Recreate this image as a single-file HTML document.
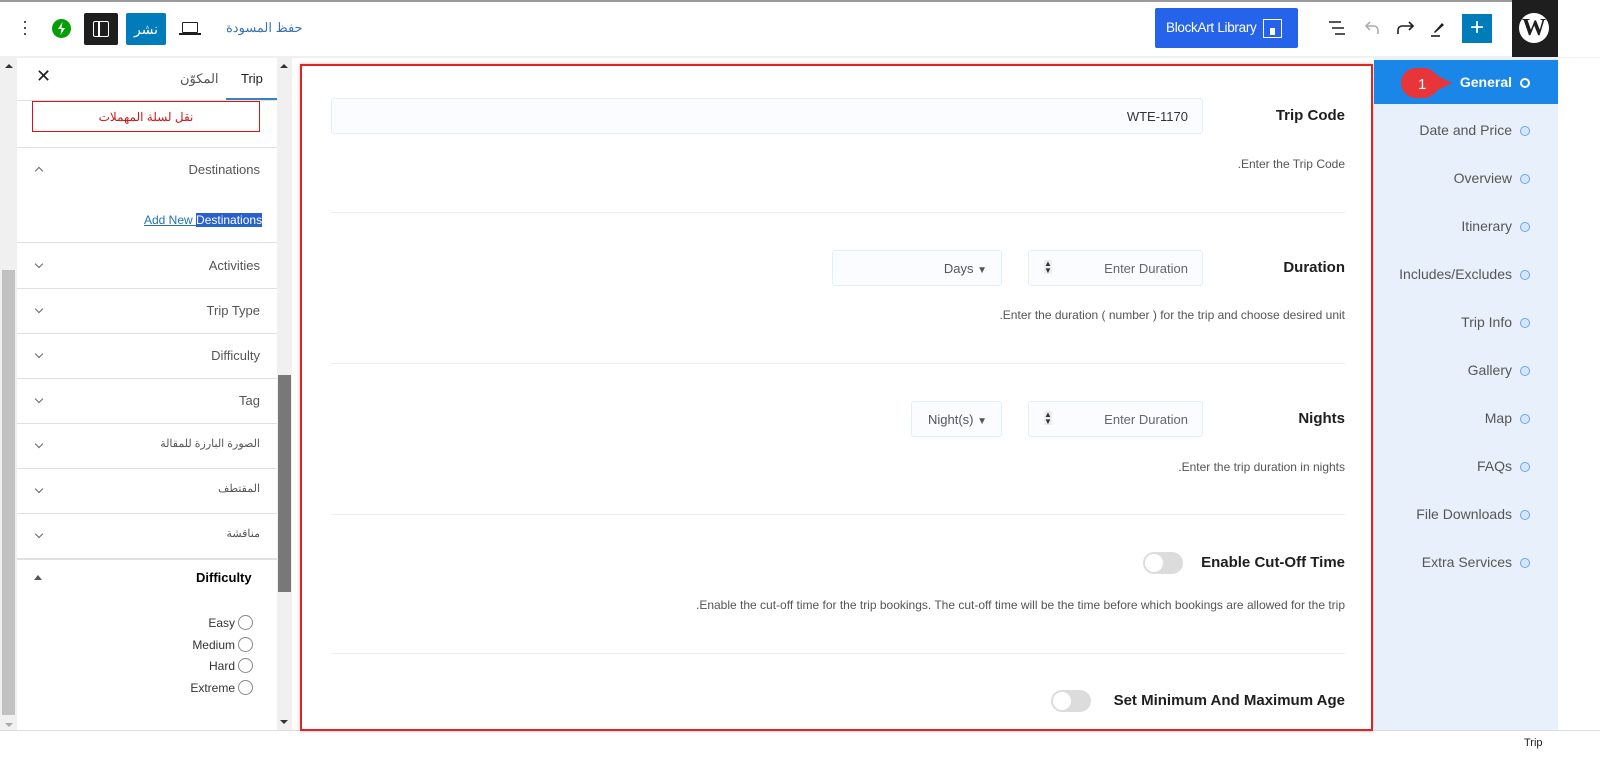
<!DOCTYPE html>
<html><head><meta charset="utf-8"><style>
*{box-sizing:border-box;margin:0;padding:0}
body{width:1600px;height:768px;overflow:hidden;background:#fff;font-family:"Liberation Sans","Noto Sans CJK SC",sans-serif;position:relative;color:#1e1e1e}
.a{position:absolute}
.r{text-align:right}
.sep{position:absolute;left:17px;width:260px;height:1px;background:#e0e0e0}
.row{position:absolute;left:17px;width:243px;text-align:right;font-size:13px;color:#555}
.chev{position:absolute;left:36px;width:6px;height:6px;border-right:1.3px solid #666;border-bottom:1.3px solid #666;transform:rotate(45deg)}
.lab{position:absolute;right:255px;font-size:15px;font-weight:bold;color:#1e1e1e;text-align:right}
.desc{position:absolute;right:255px;font-size:12px;color:#555;text-align:right}
.inp{position:absolute;border:1px solid #e2eefb;background:#fafcff;border-radius:3px;height:36px;font-size:13px;color:#555}
.hl{position:absolute;left:331px;width:1014px;height:1px;background:#eceef0}
.nav{position:absolute;right:70px;font-size:14px;color:#555;text-align:right}
.dot{display:inline-block;width:10px;height:10px;border:1.5px solid #6aa8ea;background:#d6e6f8;border-radius:50%;margin-left:8px;vertical-align:-1px}
.tog{position:absolute;width:40px;height:22px;border-radius:11px;background:#dcdcdc}
.tog:after{content:"";position:absolute;left:2px;top:2px;width:18px;height:18px;border-radius:50%;background:#fff}
.rad{display:inline-block;width:15px;height:15px;border:1px solid #888;border-radius:50%;margin-left:3px;vertical-align:-3px}
</style></head><body>
<div class="a" style="left:0;top:0;width:1600px;height:2px;background:#9a9a9a"></div>
<div class="a" style="left:0;top:56px;width:1600px;height:2px;background:#f0f0f0"></div>
<div class="a" style="left:22px;top:18px;font-size:18px;line-height:6px;color:#333;width:6px">·<br>·<br>·</div>
<div class="a" style="left:52px;top:19px;width:19px;height:19px;border-radius:50%;background:#069e08"><svg width="19" height="19"><path d="M10.5 3 L6 10 H9.5 L8.5 16 L13 9 H9.5Z" fill="#fff"/></svg></div>
<div class="a" style="left:84px;top:13px;width:34px;height:32px;background:#1e1e1e;border-radius:2px"><div class="a" style="left:9px;top:8px;width:16px;height:16px;border:1.5px solid #fff;border-radius:2px"></div><div class="a" style="left:14px;top:8px;width:1.5px;height:16px;background:#fff"></div></div>
<div class="a" style="left:126px;top:13px;width:40px;height:32px;background:#007cba;color:#fff;font-size:14px;text-align:center;line-height:32px;border-radius:2px">نشر</div>
<div class="a" style="left:182px;top:22px;width:16px;height:11px;border:1.6px solid #1e1e1e;border-radius:1px"></div>
<div class="a" style="left:179px;top:33px;width:22px;height:2px;background:#1e1e1e"></div>
<div class="a" style="left:226px;top:20px;font-size:13px;color:#3a70b0">حفظ المسودة</div>
<div class="a" style="left:1155px;top:8px;width:143px;height:40px;background:#2563eb;border-radius:2px"></div>
<div class="a" style="left:1166px;top:20px;font-size:13.5px;color:#fff;letter-spacing:-0.3px">BlockArt Library</div>
<div class="a" style="left:1263px;top:19px;width:19px;height:19px;border:1.5px solid #fff"></div>
<div class="a" style="left:1270px;top:28px;width:5px;height:7px;background:#fff"></div>
<svg class="a" style="left:1325px;top:18px" width="24" height="22"><path d="M4 4h12M7 10h12M10 16h10" stroke="#1e1e1e" stroke-width="1.6"/></svg>
<svg class="a" style="left:1362px;top:18px" width="22" height="22"><path d="M16 16v-4a4 4 0 0 0-4-4H5M8 4 4 8l4 4" stroke="#aaa" stroke-width="1.5" fill="none"/></svg>
<svg class="a" style="left:1394px;top:18px" width="22" height="22"><path d="M4 16v-4a4 4 0 0 1 4-4h11M15 4l4 4-4 4" stroke="#1e1e1e" stroke-width="1.6" fill="none"/></svg>
<svg class="a" style="left:1428px;top:18px" width="20" height="22"><path d="M6 14l8-9 2 2-9 8z" fill="#1e1e1e"/><path d="M3 18h9" stroke="#1e1e1e" stroke-width="1.6"/></svg>
<div class="a" style="left:1462px;top:14px;width:30px;height:29px;background:#007cba;color:#fff;font-size:24px;text-align:center;line-height:28px">+</div>
<div class="a" style="left:1512px;top:0;width:88px;height:57px;background:#fff"></div>
<div class="a" style="left:1512px;top:0;width:46px;height:57px;background:#1e1e1e"><div class="a" style="left:7px;top:13px;width:30px;height:30px;border-radius:50%;background:#fff;color:#1e1e1e;font:bold 24px 'Liberation Serif',serif;text-align:center;line-height:31px">W</div></div>
<div class="a" style="left:0;top:58px;width:17px;height:672px;background:#f0f0f0"></div>
<div class="a" style="left:2px;top:270px;width:13px;height:445px;background:#c1c1c1"></div>
<div class="a" style="left:5px;top:64px;border:4px solid transparent;border-bottom:4px solid #333;border-top:0"></div>
<div class="a" style="left:5px;top:723px;border:4px solid transparent;border-top:4px solid #aaa;border-bottom:0"></div>
<div class="a" style="left:17px;top:58px;width:260px;height:672px;background:#fff"></div>
<div class="a" style="left:36px;top:66px;font-size:18px;color:#1e1e1e">✕</div>
<div class="a" style="left:180px;top:71px;font-size:13px;color:#555">المكوّن</div>
<div class="a" style="left:241px;top:71px;font-size:13px;color:#1e1e1e">Trip</div>
<div class="a" style="left:226px;top:98px;width:51px;height:2px;background:#3582c4"></div>
<div class="sep" style="top:100px"></div>
<div class="a" style="left:32px;top:101px;width:228px;height:31px;border:1px solid #cc1818;color:#cc1818;font-size:12px;text-align:center;line-height:30px">نقل لسلة المهملات</div>
<div class="sep" style="top:147px"></div>
<div class="row" style="top:162px">Destinations</div>
<div class="chev" style="top:168px;transform:rotate(225deg)"></div>
<div class="a" style="left:144px;top:213px;font-size:12px;color:#2271b1;text-decoration:underline">Add New <span style="background:#2b5fd0;color:#fff">Destinations</span></div>
<div class="sep" style="top:242px"></div>
<div class="row" style="top:258px">Activities</div><div class="chev" style="top:261px"></div>
<div class="sep" style="top:288px"></div>
<div class="row" style="top:303px">Trip Type</div><div class="chev" style="top:306px"></div>
<div class="sep" style="top:333px"></div>
<div class="row" style="top:348px">Difficulty</div><div class="chev" style="top:351px"></div>
<div class="sep" style="top:378px"></div>
<div class="row" style="top:393px">Tag</div><div class="chev" style="top:396px"></div>
<div class="sep" style="top:423px"></div>
<div class="row" style="top:437px;font-size:11px">الصورة البارزة للمقالة</div><div class="chev" style="top:441px"></div>
<div class="sep" style="top:468px"></div>
<div class="row" style="top:482px;font-size:11px">المقتطف</div><div class="chev" style="top:486px"></div>
<div class="sep" style="top:513px"></div>
<div class="row" style="top:527px;font-size:11px">مناقشة</div><div class="chev" style="top:531px"></div>
<div class="sep" style="top:558px;height:2px"></div>
<div class="a" style="left:196px;top:570px;font-size:13px;font-weight:bold;color:#000">Difficulty</div>
<div class="a" style="left:34px;top:575px;border:4px solid transparent;border-bottom:5px solid #555;border-top:0"></div>
<div class="a r" style="right:1347px;top:613px;font-size:12px;color:#333;line-height:21.7px">Easy<span class="rad"></span><br>Medium<span class="rad"></span><br>Hard<span class="rad"></span><br>Extreme<span class="rad"></span></div>
<div class="a" style="left:277px;top:58px;width:15px;height:672px;background:#f0f0f0"></div>
<div class="a" style="left:278px;top:375px;width:13px;height:217px;background:#787878"></div>
<div class="a" style="left:280px;top:64px;border:4px solid transparent;border-bottom:4px solid #333;border-top:0"></div>
<div class="a" style="left:280px;top:720px;border:4px solid transparent;border-top:4px solid #333;border-bottom:0"></div>
<div class="a" style="left:0;top:730px;width:1600px;height:1px;background:#ddd"></div>
<div class="a" style="left:1524px;top:737px;font-size:11px;color:#1e1e1e">Trip</div>
<div class="a" style="left:300px;top:64px;width:1073px;height:667px;border:2px solid #e02424;box-shadow:0 0 3px rgba(0,0,0,.3)"></div>
<div class="lab" style="top:107px">Trip Code</div>
<div class="inp" style="left:331px;top:98px;width:872px;text-align:right;padding-right:14px;line-height:35px;color:#333">WTE-1170</div>
<div class="desc" style="top:157px">.Enter the Trip Code</div>
<div class="hl" style="top:212px"></div>
<div class="lab" style="top:259px">Duration</div>
<div class="inp" style="left:1028px;top:250px;width:175px;line-height:35px;text-align:right;padding-right:14px;color:#666">Enter Duration</div>
<div class="a" style="left:1044px;top:260px;font-size:8px;line-height:7px;background:#eee;color:#333">▲<br>▼</div>
<div class="inp" style="left:832px;top:250px;width:170px;line-height:35px;text-align:right;padding-right:14px">Days <span style="font-size:10px">▼</span></div>
<div class="desc" style="top:308px">.Enter the duration ( number ) for the trip and choose desired unit</div>
<div class="hl" style="top:363px"></div>
<div class="lab" style="top:410px">Nights</div>
<div class="inp" style="left:1028px;top:401px;width:175px;line-height:35px;text-align:right;padding-right:14px;color:#666">Enter Duration</div>
<div class="a" style="left:1044px;top:411px;font-size:8px;line-height:7px;background:#eee;color:#333">▲<br>▼</div>
<div class="inp" style="left:911px;top:401px;width:91px;line-height:35px;text-align:right;padding-right:14px">Night(s) <span style="font-size:10px">▼</span></div>
<div class="desc" style="top:460px">.Enter the trip duration in nights</div>
<div class="hl" style="top:514px"></div>
<div class="lab" style="top:554px">Enable Cut-Off Time</div>
<div class="tog" style="left:1143px;top:552px"></div>
<div class="desc" style="top:598px">.Enable the cut-off time for the trip bookings. The cut-off time will be the time before which bookings are allowed for the trip</div>
<div class="hl" style="top:653px"></div>
<div class="lab" style="top:692px">Set Minimum And Maximum Age</div>
<div class="tog" style="left:1051px;top:690px"></div>
<div class="a" style="left:1374px;top:58px;width:184px;height:672px;background:#e8f1fb"></div>
<div class="a" style="left:1374px;top:60px;width:184px;height:44px;background:#1a86e8"></div>
<div class="nav" style="top:74px;color:#fff;font-weight:bold">General<span class="dot" style="background:transparent;border-color:#fff;border-width:2px"></span></div>
<svg class="a" style="left:1400px;top:66px" width="60" height="34"><path d="M16 2h8c6 0 10 4 14 8l14 7-14 7c-4 4-8 8-14 8h-8A15 15 0 0 1 16 2z" fill="#e8353a"/><text x="18" y="23" fill="#fff" font-size="15" font-family="Liberation Sans">1</text></svg>
<div class="nav" style="top:122px">Date and Price<span class="dot"></span></div>
<div class="nav" style="top:170px">Overview<span class="dot"></span></div>
<div class="nav" style="top:218px">Itinerary<span class="dot"></span></div>
<div class="nav" style="top:266px">Includes/Excludes<span class="dot"></span></div>
<div class="nav" style="top:314px">Trip Info<span class="dot"></span></div>
<div class="nav" style="top:362px">Gallery<span class="dot"></span></div>
<div class="nav" style="top:410px">Map<span class="dot"></span></div>
<div class="nav" style="top:458px">FAQs<span class="dot"></span></div>
<div class="nav" style="top:506px">File Downloads<span class="dot"></span></div>
<div class="nav" style="top:554px">Extra Services<span class="dot"></span></div>
</body></html>
